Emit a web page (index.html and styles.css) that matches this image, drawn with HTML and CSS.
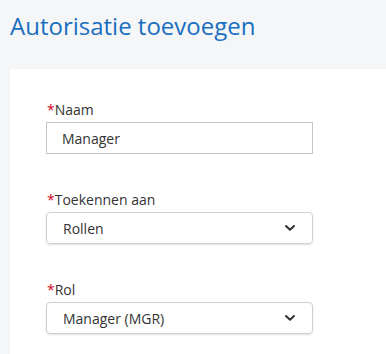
FILE: index.html
```html
<!DOCTYPE html>
<html lang="nl">
<head>
  <meta charset="UTF-8">
  <meta name="viewport" content="width=device-width, initial-scale=1.0">
  <title>Autorisatie toevoegen</title>
  <link rel="stylesheet" href="styles.css">
</head>
<body>
  <h1 class="page-title">Autorisatie toevoegen</h1>
  <div class="card">
    <div class="field">
      <label class="field-label" for="naam"><span class="req">*</span>Naam</label>
      <input class="text-input" id="naam" type="text" value="Manager">
    </div>
    <div class="field">
      <label class="field-label"><span class="req">*</span>Toekennen aan</label>
      <div class="select">
        <span class="select-value">Rollen</span>
        <svg class="chevron" width="12" height="8" viewBox="0 0 12 8">
          <path d="M2 2 L6 5.8 L10 2" fill="none" stroke="#333" stroke-width="2" stroke-linecap="round" stroke-linejoin="round"/>
        </svg>
      </div>
    </div>
    <div class="field">
      <label class="field-label"><span class="req">*</span>Rol</label>
      <div class="select">
        <span class="select-value">Manager (MGR)</span>
        <svg class="chevron" width="12" height="8" viewBox="0 0 12 8">
          <path d="M2 2 L6 5.8 L10 2" fill="none" stroke="#333" stroke-width="2" stroke-linecap="round" stroke-linejoin="round"/>
        </svg>
      </div>
    </div>
  </div>
</body>
</html>
```

FILE: styles.css
```css
body {
  margin: 0;
  height: 100vh;
  background-color: #f5f6f8;
  font-family: "Open Sans", Arial, sans-serif;
  color: #333;
  overflow: hidden;
}
.page-title {
  margin: 9px 0 27px 10px;
  font-size: 24px;
  font-weight: 400;
  color: #1a6fc0;
  line-height: normal;
}
.card {
  box-sizing: border-box;
  height: calc(100vh - 69px);
  background: #fff;
  margin-left: 10px;
  padding: 31px 0 0 36px;
}
.field {
  width: 267px;
  margin-bottom: 36px;
}
.field-label {
  display: block;
  font-size: 14px;
  line-height: 19px;
  margin-bottom: 3px;
  margin-left: 1px;
}
.req {
  color: #d0021b;
}
.text-input {
  display: block;
  box-sizing: border-box;
  width: 100%;
  height: 32px;
  padding: 0 15px;
  border: 1px solid #c6c6c6;
  border-radius: 0;
  font-family: inherit;
  font-size: 14px;
  color: #333;
  outline: none;
}
.select {
  display: flex;
  align-items: center;
  justify-content: space-between;
  box-sizing: border-box;
  height: 32px;
  padding: 0 16px;
  border: 1px solid #d0d0d0;
  border-radius: 4px;
  box-shadow: 0 1px 2px rgba(0, 0, 0, 0.12);
  font-size: 14px;
}
.chevron {
  display: block;
}
```
